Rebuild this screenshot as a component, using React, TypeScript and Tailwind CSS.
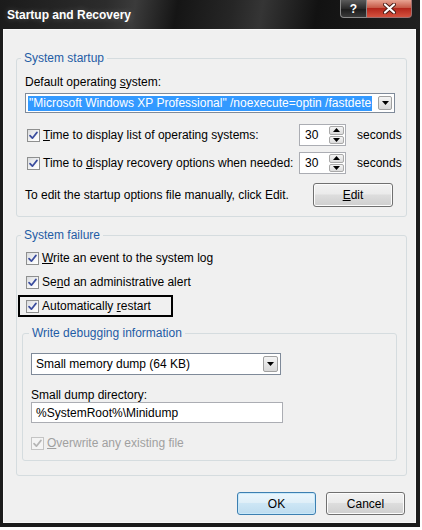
import React from "react";

function Check({ disabled = false }: { disabled?: boolean }) {
  return (
    <span
      className={
        "w-[13px] h-[13px] shrink-0 border flex items-center justify-center " +
        (disabled
          ? "border-[#c4c4c4] bg-[#f4f4f4]"
          : "border-[#8e8f8f] bg-[linear-gradient(135deg,#d9dbde_0%,#f6f6f6_60%,#ffffff_100%)]")
      }
    >
      <svg width="11" height="11" viewBox="0 0 11 11">
        <path
          d="M2 5.6 L4.4 8.2 L9 2.4"
          fill="none"
          stroke={disabled ? "#b5b5b5" : "#3b4d9e"}
          strokeWidth="1.7"
          strokeLinecap="round"
          strokeLinejoin="round"
        />
      </svg>
    </span>
  );
}

function DownArrow() {
  return (
    <svg width="7" height="4" viewBox="0 0 7 4">
      <path d="M0 0 H7 L3.5 4 Z" fill="#000" />
    </svg>
  );
}

function Spinner() {
  return (
    <div className="flex w-[47px] h-[22px] border border-[#abadb3] bg-white">
      <div className="flex-1 pl-[5px] flex items-center">30</div>
      <div className="w-[15px] flex flex-col gap-[1px] my-[1px] mr-[1px]">
        <div className="flex-1 border border-[#a9a9a9] rounded-[2px] bg-[linear-gradient(#f4f4f4,#dcdcdc)] flex items-center justify-center">
          <svg width="7" height="4" viewBox="0 0 7 4">
            <path d="M0 4 H7 L3.5 0 Z" fill="#000" />
          </svg>
        </div>
        <div className="flex-1 border border-[#a9a9a9] rounded-[2px] bg-[linear-gradient(#f4f4f4,#dcdcdc)] flex items-center justify-center">
          <DownArrow />
        </div>
      </div>
    </div>
  );
}

function Btn({ children, def = false }: { children: React.ReactNode; def?: boolean }) {
  return (
    <div
      className={
        "w-[79px] h-[23px] rounded-[3px] border flex items-center justify-center " +
        (def
          ? "border-[#3c7fb1] bg-[linear-gradient(#eaf6fd_0%,#e0eff8_45%,#cde6f5_50%,#bedcef_100%)] shadow-[inset_0_0_0_1px_#c8e8f9]"
          : "border-[#707070] bg-[linear-gradient(#f2f2f2_0%,#ebebeb_45%,#dddddd_50%,#cfcfcf_100%)] shadow-[inset_0_0_0_1px_#fcfcfc]")
      }
    >
      {children}
    </div>
  );
}

function Legend({ children, ml }: { children: React.ReactNode; ml: string }) {
  return (
    <div className={"-mt-[9px] px-[3px] w-fit bg-[#f0f0f0] leading-[16px] text-[#1f5ca5] " + ml}>
      {children}
    </div>
  );
}

export default function App() {
  return (
    <div className="w-[422px] h-[530px] bg-white font-['Liberation_Sans',Arial,sans-serif] text-[12px] text-black">
      <div className="w-[420px] h-[527px] bg-[#1c1c1c] flex flex-col pl-[3px] pr-[4px] pb-[4px]">
        {/* title bar */}
        <div className="h-[29px] -ml-[3px] -mr-[4px] flex items-start bg-[linear-gradient(100deg,#1b1b1b_0%,#2c2c2c_25%,#3b3b3b_32%,#151515_42%,#262626_55%,#353535_62%,#121212_75%,#202020_100%)]">
          <div className="pl-[7px] pt-[7px] text-white font-bold text-[12px] leading-[16px] [text-shadow:0_0_6px_rgba(255,255,255,0.25)]">
            Startup and Recovery
          </div>
          <div className="ml-auto mr-[8px] flex h-[18px]">
            <div className="w-[27px] h-full border border-[#8a8a8a] border-t-0 rounded-bl-[4px] bg-[linear-gradient(#5a5a5a,#2a2a2a_50%,#1a1a1a_51%,#3a3a3a)] flex items-center justify-center text-white font-bold text-[12px] leading-none">
              ?
            </div>
            <div className="w-[45px] h-full border border-[#a07070] border-t-0 border-l-0 rounded-br-[4px] bg-[linear-gradient(#e8a493,#c65a48_45%,#b3261b_50%,#d4523f)] flex items-center justify-center">
              <svg width="13" height="11" viewBox="0 0 13 11">
                <path d="M2 1.5 L11 9.5 M11 1.5 L2 9.5" stroke="#4a1a14" strokeWidth="4" strokeLinecap="round" />
                <path d="M2 1.5 L11 9.5 M11 1.5 L2 9.5" stroke="#fff" strokeWidth="2.2" strokeLinecap="round" />
              </svg>
            </div>
          </div>
        </div>

        {/* client */}
        <div className="flex-1 bg-[#f0f0f0] border border-[#f8f8f8] flex flex-col">
          {/* System startup */}
          <div className="mt-[28px] ml-[12px] w-[391px] border border-[#d5dcdf] rounded-[3px] pl-[8px] pb-[9px] flex flex-col">
            <Legend ml="ml-[-4px]">System startup</Legend>
            <div className="mt-[8px] leading-[16px]">
              Default operating <span className="underline">s</span>ystem:
            </div>
            <div className="mt-[3px] w-[370px] h-[20px] border border-[#7f8a99] bg-white flex items-center pl-[2px] pr-[2px]">
              <div className="flex-1 h-[15px] bg-[#3399ff] text-white leading-[15px] whitespace-nowrap pl-[1px]">
                "Microsoft Windows XP Professional" /noexecute=optin /fastdete
              </div>
              <div className="ml-[6px] w-[14px] h-[14px] border border-[#a0a0a0] rounded-[2px] bg-[linear-gradient(#f4f4f4,#d8d8d8)] flex items-center justify-center">
                <DownArrow />
              </div>
            </div>
            <div className="mt-[11px] flex items-center h-[22px]">
              <div className="w-[274px] flex items-center pl-[2px]">
                <Check />
                <span className="ml-[3px] whitespace-nowrap">
                  <span className="underline">T</span>ime to display list of operating systems:
                </span>
              </div>
              <Spinner />
              <span className="ml-[11px]">seconds</span>
            </div>
            <div className="mt-[6px] flex items-center h-[22px]">
              <div className="w-[274px] flex items-center pl-[2px]">
                <Check />
                <span className="ml-[3px] whitespace-nowrap">
                  Time to <span className="underline">d</span>isplay recovery options when needed:
                </span>
              </div>
              <Spinner />
              <span className="ml-[11px]">seconds</span>
            </div>
            <div className="mt-[9px] flex items-center h-[24px]">
              <span className="w-[288px]">To edit the startup options file manually, click Edit.</span>
              <div className="w-[80px] h-[24px] rounded-[3px] border border-[#707070] bg-[linear-gradient(#f2f2f2_0%,#ebebeb_45%,#dddddd_50%,#cfcfcf_100%)] shadow-[inset_0_0_0_1px_#fcfcfc] flex items-center justify-center">
                <span>
                  <span className="underline">E</span>dit
                </span>
              </div>
            </div>
          </div>

          {/* System failure */}
          <div className="mt-[18px] ml-[12px] w-[391px] border border-[#d5dcdf] rounded-[3px] pb-[14px] flex flex-col">
            <Legend ml="ml-[4px]">System failure</Legend>
            <div className="mt-[4px] flex flex-col gap-[2px]">
              <div className="h-[22px] flex items-center pl-[9px]">
                <Check />
                <span className="ml-[3px]">
                  <span className="underline">W</span>rite an event to the system log
                </span>
              </div>
              <div className="h-[22px] flex items-center pl-[9px]">
                <Check />
                <span className="ml-[3px]">
                  Se<span className="underline">n</span>d an administrative alert
                </span>
              </div>
              <div className="ml-[1px] w-[155px] h-[22px] border-2 border-black flex items-center pl-[6px]">
                <Check />
                <span className="ml-[3px]">
                  Automatically <span className="underline">r</span>estart
                </span>
              </div>
            </div>

            {/* Write debugging information */}
            <div className="mt-[16px] ml-[5px] w-[375px] border border-[#d5dcdf] rounded-[3px] pl-[8px] pb-[9px] flex flex-col">
              <Legend ml="ml-[-2px]">Write debugging information</Legend>
              <div className="mt-[12px] w-[250px] h-[22px] border border-[#7f8a99] bg-white flex items-center pl-[4px] pr-[2px]">
                <span className="flex-1">Small memory dump (64 KB)</span>
                <div className="w-[15px] h-[16px] border border-[#a0a0a0] rounded-[2px] bg-[linear-gradient(#f4f4f4,#d8d8d8)] flex items-center justify-center">
                  <DownArrow />
                </div>
              </div>
              <div className="mt-[13px] leading-[14px]">Small dump directory:</div>
              <div className="w-[252px] h-[21px] border border-[#abadb3] bg-white flex items-center pl-[4px]">
                %SystemRoot%\Minidump
              </div>
              <div className="mt-[12px] h-[16px] flex items-center">
                <Check disabled />
                <span className="ml-[3px] text-[#a0a0a0]">
                  <span className="underline">O</span>verwrite any existing file
                </span>
              </div>
            </div>
          </div>

          {/* buttons */}
          <div className="mt-[16px] flex justify-end gap-[10px] pr-[10px]">
            <Btn def>OK</Btn>
            <Btn>Cancel</Btn>
          </div>
        </div>
      </div>
    </div>
  );
}
